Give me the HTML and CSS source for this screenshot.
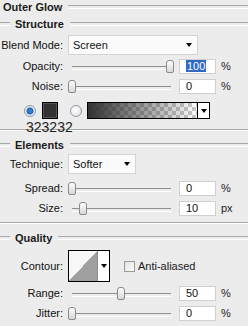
FILE: index.html
```html
<!DOCTYPE html>
<html>
    <head>
        <link rel="stylesheet" href="styles.css">
    </head>
    <body>
        <div class="panel">
            <div class="title"><span>Outer Glow</span></div>

            <!-- structure -->
            <div class="group-head"><span>Structure</span></div>
            <div class="row blend">
                <label>Blend Mode:</label>
                <div class="select wide"><span>Screen</span><i class="arrow"></i></div>
            </div>
            <div class="row slide first">
                <label>Opacity:</label>
                <div class="slider"><div class="thumb" style="left: 98px"></div></div>
                <div class="field"><span class="sel">100</span></div>
                <span class="unit">%</span>
            </div>
            <div class="row slide">
                <label>Noise:</label>
                <div class="slider"><div class="thumb" style="left: 0px"></div></div>
                <div class="field">0</div>
                <span class="unit">%</span>
            </div>
            <div class="fill-row">
                <i class="radio on"></i>
                <i class="swatch"></i>
                <i class="radio"></i>
                <div class="gradient"><div class="ramp"></div><div class="drop"><i class="arrow"></i></div></div>
                <span class="note">323232</span>
            </div>
            <div class="sep first-sep"></div>

            <!-- elements -->
            <div class="group-head elements"><span>Elements</span></div>
            <div class="row tech">
                <label>Technique:</label>
                <div class="select narrow"><span>Softer</span><i class="arrow"></i></div>
            </div>
            <div class="row slide spread">
                <label>Spread:</label>
                <div class="slider"><div class="thumb" style="left: 0px"></div></div>
                <div class="field">0</div>
                <span class="unit">%</span>
            </div>
            <div class="row slide">
                <label>Size:</label>
                <div class="slider"><div class="thumb" style="left: 11px"></div></div>
                <div class="field">10</div>
                <span class="unit">px</span>
            </div>
            <div class="sep"></div>

            <!-- quality -->
            <div class="group-head quality"><span>Quality</span></div>
            <div class="row contour-row">
                <label>Contour:</label>
                <div class="contour"><div class="graph"></div><div class="drop"><i class="arrow"></i></div></div>
                <i class="check"></i>
                <span class="check-label">Anti-aliased</span>
            </div>
            <div class="row slide range">
                <label>Range:</label>
                <div class="slider"><div class="thumb" style="left: 49px"></div></div>
                <div class="field">50</div>
                <span class="unit">%</span>
            </div>
            <div class="row slide">
                <label>Jitter:</label>
                <div class="slider"><div class="thumb" style="left: 0px"></div></div>
                <div class="field">0</div>
                <span class="unit">%</span>
            </div>
        </div>
    </body>
</html>
```

FILE: styles.css
```css
*{
    margin: 0;
    padding: 0;
    box-sizing: border-box;
}
body{
    background: #ececec;
    font-family: 'Liberation Sans', Arial, sans-serif;
    font-size: 11px;
    color: #111;
    overflow: hidden;
}
.panel{
    position: relative;
    width: 248px;
    height: 326px;
}

/* headers with etched lines */
.title, .group-head{
    display: flex;
    align-items: center;
    gap: 5px;
    height: 14px;
    font-weight: bold;
    font-size: 11px;
    color: #1a1a1a;
}
.title{
    padding-left: 3px;
}
.group-head{
    margin-top: 3px;
}
.title::after, .group-head::after, .group-head::before, .sep{
    content: '';
    height: 2px;
    border-top: 1px solid #a9a9a9;
    border-bottom: 1px solid #fff;
}
.title::after, .group-head::after{
    flex: 1;
    margin-left: 1px;
}
.group-head::before{
    width: 10px;
}
.sep{
    display: block;
    width: 100%;
    margin-top: 6px;
}
.first-sep{
    margin-top: 10px;
}
.elements{
    margin-top: 7px;
}
.quality{
    margin-top: 7px;
}

/* rows */
.row{
    display: flex;
    align-items: center;
}
.row label{
    width: 64px;
    text-align: right;
    padding-right: 1px;
    margin-right: 4px;
}
.blend{
    height: 20px;
    margin-top: 4px;
}
.tech{
    height: 20px;
    margin-top: 2px;
}
.slide{
    height: 16px;
    margin-top: 4px;
}
.slide.first{
    margin-top: 3px;
}
.spread{
    margin-top: 6px;
}
.range{
    margin-top: 3px;
}

.select{
    height: 20px;
    background: #fbfbfb;
    border: 1px solid #d4d4d4;
    display: flex;
    align-items: center;
    justify-content: space-between;
    padding: 0 5px 0 4px;
}
.wide{
    width: 130px;
}
.narrow{
    width: 68px;
}
.arrow{
    display: block;
    width: 0;
    height: 0;
    border-left: 3.5px solid transparent;
    border-right: 3.5px solid transparent;
    border-top: 4px solid #000;
}

.slider{
    position: relative;
    width: 105px;
    height: 13px;
    margin-right: 6px;
}
.slider::before{
    content: '';
    position: absolute;
    left: 4px;
    right: 2px;
    top: 6px;
    height: 2px;
    border-top: 1px solid #8f8f8f;
    border-bottom: 1px solid #fff;
}
.thumb{
    position: absolute;
    top: 0;
    width: 8px;
    height: 13px;
    background: linear-gradient(#fdfdfd, #d9d9d9);
    border: 1px solid #8a8a8a;
    border-radius: 3px 3px 2px 2px;
}

.field{
    width: 37px;
    height: 15px;
    background: #fff;
    border: 1px solid #cfcfcf;
    padding-left: 6px;
    line-height: 13px;
    margin-right: 5px;
}
.sel{
    background: #3169c6;
    color: #fff;
    padding: 0 1px;
}
.unit{
    color: #222;
}

/* fill type row */
.fill-row{
    position: relative;
    display: flex;
    align-items: center;
    height: 17px;
    margin-top: 8px;
    padding-left: 24px;
}
.radio{
    display: block;
    width: 12px;
    height: 12px;
    border-radius: 50%;
    border: 1px solid #8d98a8;
    background: radial-gradient(circle at 40% 40%, #fff, #dcdcdc);
}
.radio.on{
    background: radial-gradient(circle, #2e7fd0 0 2px, #1d5fa8 3px, #f4f4f4 4px, #d8dde4 6px);
}
.swatch{
    display: block;
    width: 16px;
    height: 17px;
    margin-left: 6px;
    margin-right: 12px;
    background: #323232;
    border: 1px solid #000;
    box-shadow: inset 0 0 0 1px #555;
}
.gradient{
    display: flex;
    width: 123px;
    height: 17px;
    margin-left: 5px;
    border: 1px solid #000;
}
.ramp{
    flex: 1;
    background:
        linear-gradient(to right, #323232, rgba(50, 50, 50, 0)),
        repeating-conic-gradient(#c8c8c8 0 25%, #fff 0 50%) 0 0 / 8px 8px;
}
.drop{
    width: 12px;
    background: #fff;
    border-left: 1px solid #000;
    display: flex;
    align-items: center;
    justify-content: center;
}
.note{
    position: absolute;
    left: 26px;
    top: 17px;
    font-size: 14px;
    line-height: 16px;
    color: #1e1e1e;
}

/* contour */
.contour-row{
    height: 32px;
    margin-top: 5px;
}
.contour{
    display: flex;
    width: 42px;
    height: 32px;
    border: 1px solid #000;
}
.graph{
    flex: 1;
    background: linear-gradient(to top left, #a0a0a0 50%, #f8f8f8 50%);
}
.contour .drop{
    border-left: 1px solid #8a8a8a;
}
.check{
    display: block;
    width: 11px;
    height: 11px;
    margin-left: 14px;
    margin-right: 3px;
    border: 1px solid #9a9a9a;
    background: linear-gradient(135deg, #e2e2e2, #fcfcfc);
}
.check-label{
    color: #1a1a1a;
}
```
